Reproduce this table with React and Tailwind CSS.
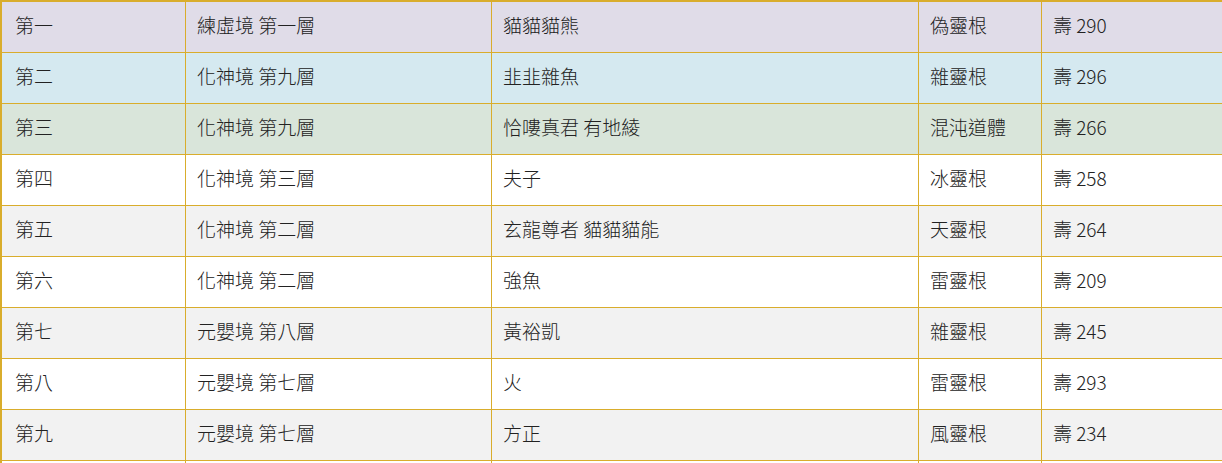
const rows = [
  ["第一", "練虛境 第一層", "貓貓貓熊", "偽靈根", "壽 290", "bg-[#e0dce8]"],
  ["第二", "化神境 第九層", "韭韭雜魚", "雜靈根", "壽 296", "bg-[#d5e9f0]"],
  ["第三", "化神境 第九層", "恰嘍真君 有地綾", "混沌道體", "壽 266", "bg-[#d9e5da]"],
  ["第四", "化神境 第三層", "夫子", "冰靈根", "壽 258", "bg-white"],
  ["第五", "化神境 第二層", "玄龍尊者 貓貓貓能", "天靈根", "壽 264", "bg-[#f2f2f2]"],
  ["第六", "化神境 第二層", "強魚", "雷靈根", "壽 209", "bg-white"],
  ["第七", "元嬰境 第八層", "黃裕凱", "雜靈根", "壽 245", "bg-[#f2f2f2]"],
  ["第八", "元嬰境 第七層", "火", "雷靈根", "壽 293", "bg-white"],
  ["第九", "元嬰境 第七層", "方正", "風靈根", "壽 234", "bg-[#f2f2f2]"],
  ["", "", "", "", "", "bg-white"],
];

const base = "h-[50px] flex items-center pr-2 pb-[3px] whitespace-nowrap";
const cell = base + " pl-[11px] border-r border-[#d9ad2c]";

export default function App() {
  return (
    <div className="w-[1222px] h-[463px] overflow-hidden bg-white">
      <div
        className="border-l-2 border-t-2 border-[#d9ad2c] text-[19px] font-light text-[#222]"
        style={{ fontFamily: '"Noto Sans CJK TC", "Noto Sans", sans-serif' }}
      >
        {rows.map((r, i) => (
          <div
            key={i}
            className={`grid grid-cols-[184px_306px_427px_123px_1fr] border-b border-[#d9ad2c] ${r[5]}`}
          >
            <div className={base + " pl-[13px] border-r border-[#d9ad2c]"}>{r[0]}</div>
            <div className={cell}>{r[1]}</div>
            <div className={cell}>{r[2]}</div>
            <div className={cell}>{r[3]}</div>
            <div className={base + " pl-[11px]"}>{r[4]}</div>
          </div>
        ))}
      </div>
    </div>
  );
}
